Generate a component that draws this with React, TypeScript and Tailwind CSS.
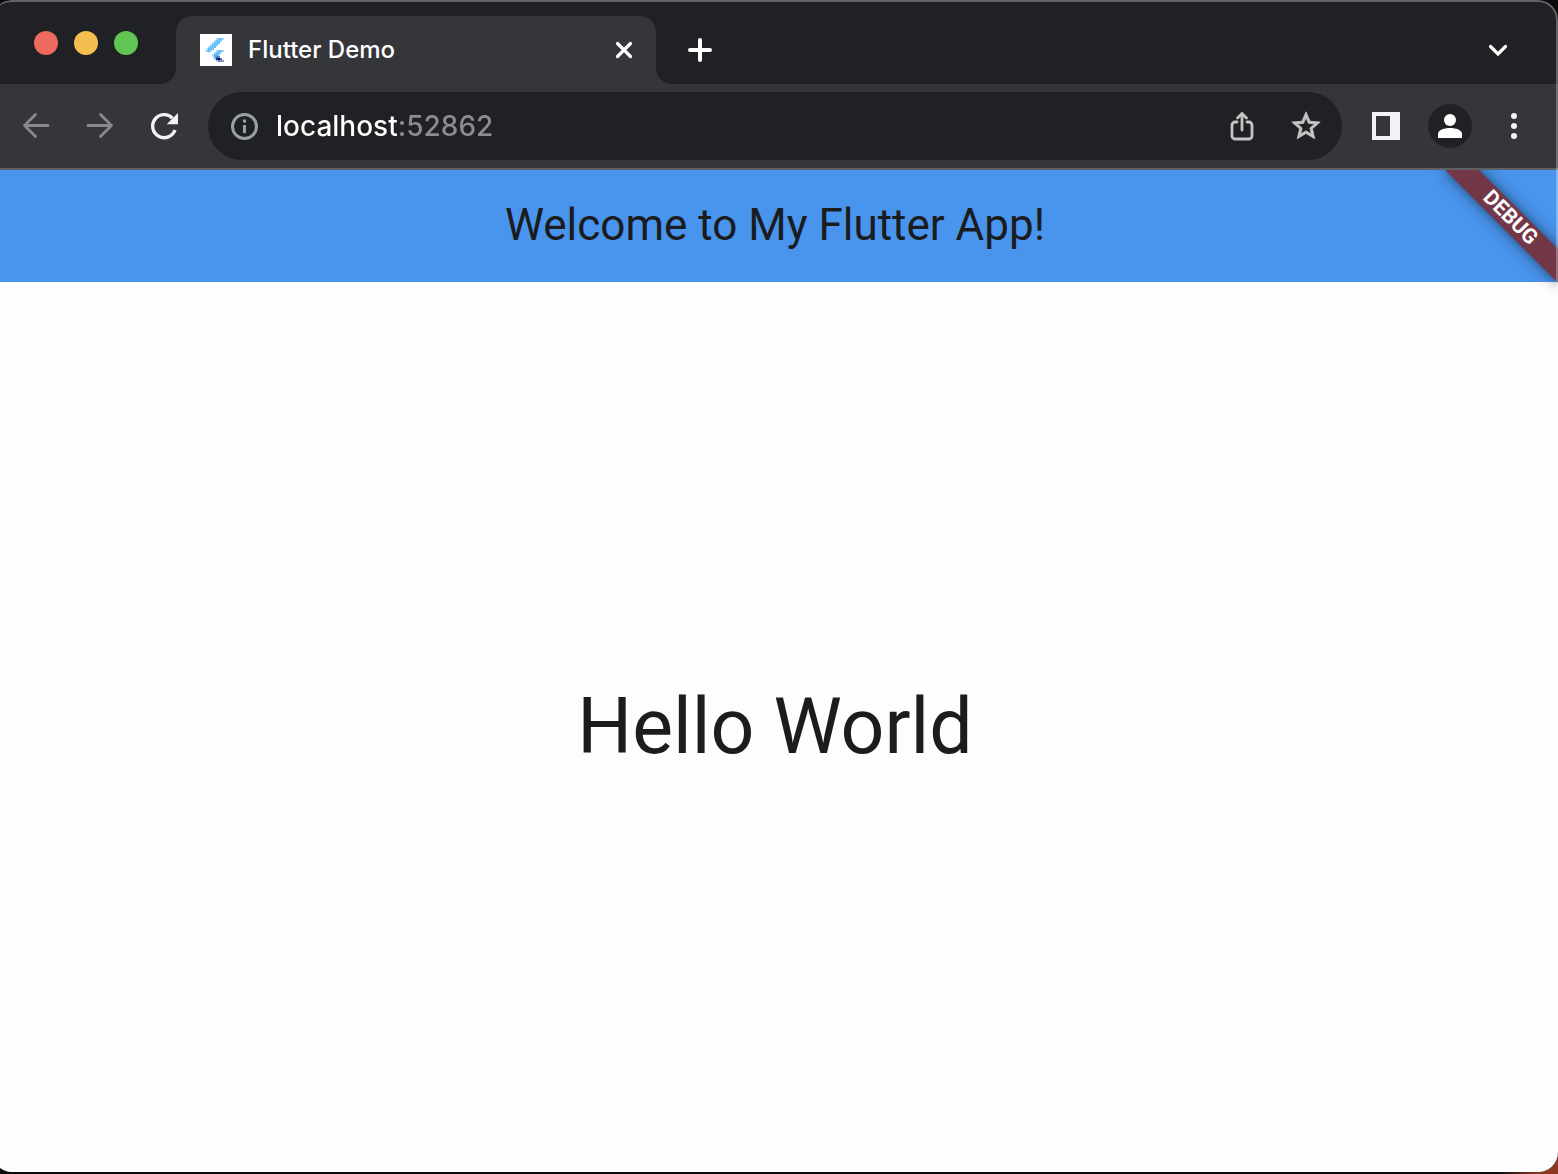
import React from 'react';

type Pixel = [x: number, y: number, w: number, color: string];

const FAVICON: Pixel[] = [
  [8, 2, 1, '#a8dafa'], [9, 2, 2, '#6cc1f7'], [11, 2, 1, '#a8dafa'],
  [7, 3, 1, '#a8dafa'], [8, 3, 2, '#6cc1f7'], [10, 3, 1, '#8fd0f9'],
  [6, 4, 1, '#a8dafa'], [7, 4, 3, '#6cc1f7'],
  [5, 5, 1, '#a8dafa'], [6, 5, 3, '#6cc1f7'],
  [4, 6, 1, '#a8dafa'], [5, 6, 3, '#6cc1f7'],
  [3, 7, 1, '#b5e0fb'], [4, 7, 3, '#6cc1f7'],
  [3, 8, 1, '#8fd0f9'], [4, 8, 1, '#6cc1f7'], [5, 8, 1, '#a8dafa'],
  [8, 8, 1, '#a8dafa'], [9, 8, 2, '#6cc1f7'], [11, 8, 1, '#a8dafa'],
  [4, 9, 1, '#d5ecfb'],
  [7, 9, 1, '#a8dafa'], [8, 9, 2, '#6cc1f7'], [10, 9, 1, '#a8dafa'],
  [6, 10, 1, '#a8dafa'], [7, 10, 2, '#57b4f2'], [9, 10, 1, '#8fd0f9'],
  [6, 11, 1, '#d5ecfb'], [7, 11, 1, '#57b4f2'], [8, 11, 1, '#3f83cf'], [9, 11, 1, '#5d7fc0'],
  [7, 12, 1, '#8fd0f9'], [8, 12, 1, '#123088'], [9, 12, 1, '#04107a'], [10, 12, 1, '#5c66a8'],
  [8, 13, 1, '#c5cae0'], [9, 13, 1, '#7079b2'], [10, 13, 2, '#8a93c0'],
];

function Favicon() {
  return (
    <svg className="size-8 shrink-0 bg-white" viewBox="0 0 16 16" shapeRendering="crispEdges" aria-hidden="true">
      {FAVICON.map(([x, y, w, color]) => (
        <rect key={`${x}-${y}`} x={x} y={y} width={w} height="1" fill={color} />
      ))}
    </svg>
  );
}

function Icon({ children }: { children: React.ReactNode }) {
  return (
    <svg className="size-8 shrink-0" viewBox="0 0 32 32" fill="none" stroke="currentColor" strokeLinecap="round" aria-hidden="true">
      {children}
    </svg>
  );
}

function ToolButton({ label, children, className = '' }: { label: string; children: React.ReactNode; className?: string }) {
  return (
    <button type="button" aria-label={label} className={`flex h-16 w-16 shrink-0 items-center justify-center ${className}`}>
      {children}
    </button>
  );
}

function TabStrip() {
  return (
    <div className="flex h-[84px] shrink-0 items-end bg-[#202124] pr-[26px]">
      <div className="flex w-[184px] shrink-0 items-center gap-4 self-stretch pt-0.5 pl-[42px]">
        <button type="button" aria-label="Close window" className="size-6 rounded-full bg-[#ed6a5e]" />
        <button type="button" aria-label="Minimize window" className="size-6 rounded-full bg-[#f5bf4f]" />
        <button type="button" aria-label="Zoom window" className="size-6 rounded-full bg-[#61c554]" />
      </div>
      <div className="relative flex h-[68px] w-[480px] items-center rounded-t-2xl bg-[#35363a] pr-4 pl-6 text-white">
        <svg className="absolute bottom-0 -left-4 size-4" viewBox="0 0 16 16" fill="#35363a" aria-hidden="true">
          <path d="M16 0v16H0A16 16 0 0 0 16 0Z" />
        </svg>
        <svg className="absolute -right-4 bottom-0 size-4" viewBox="0 0 16 16" fill="#35363a" aria-hidden="true">
          <path d="M0 0v16h16A16 16 0 0 1 0 0Z" />
        </svg>
        <Favicon />
        <span className="ml-4 flex-1 truncate text-2xl font-medium">Flutter Demo</span>
        <button type="button" aria-label="Close tab">
          <Icon>
            <path d="M9.5 9.5 22.5 22.5M22.5 9.5 9.5 22.5" strokeWidth="3.2" />
          </Icon>
        </button>
      </div>
      <button type="button" aria-label="New tab" className="flex h-[68px] w-[88px] items-center justify-center text-white">
        <Icon>
          <path d="M16 6v20M6 16h20" strokeWidth="4" />
        </Icon>
      </button>
      <button type="button" aria-label="Search tabs" className="ml-auto flex h-[68px] w-[68px] items-center justify-center text-white">
        <Icon>
          <path d="m8.5 12.5 7.5 7.5 7.5-7.5" strokeWidth="3.2" strokeLinejoin="miter" />
        </Icon>
      </button>
    </div>
  );
}

function Toolbar() {
  return (
    <div className="flex h-[86px] shrink-0 items-center border-b-2 border-[#606164] bg-[#35363a] px-3">
      <ToolButton label="Back" className="text-[#88898b]">
        <Icon>
          <path d="M28 15.500H4.500M15.500 4.500 4.500 15.500 15.500 26.500" strokeWidth="2.8" strokeLinejoin="round" />
        </Icon>
      </ToolButton>
      <ToolButton label="Forward" className="text-[#88898b]">
        <Icon>
          <path d="M4 15.500H27.500M16.500 4.500 27.500 15.500 16.500 26.500" strokeWidth="2.8" strokeLinejoin="round" />
        </Icon>
      </ToolButton>
      <ToolButton label="Reload" className="text-[#f1f3f4]">
        <Icon>
          <path d="M27 20A11.500 11.500 0 1 1 24.500 8.200" strokeWidth="3.4" strokeLinecap="butt" />
          <path d="M30 3v11.300H18.700Z" fill="currentColor" stroke="none" />
        </Icon>
      </ToolButton>
      <form className="mx-3 flex h-[68px] min-w-0 flex-1 items-center rounded-full bg-[#202124] pl-5 text-[#bdc1c6]" onSubmit={(e) => e.preventDefault()}>
        <button type="button" aria-label="View site information" className="text-[#9aa0a6]">
          <Icon>
            <circle cx="16.500" cy="16.500" r="12" strokeWidth="3" />
            <path d="M16.500 15v8M16.500 9.500v3" strokeWidth="3" strokeLinecap="butt" />
          </Icon>
        </button>
        <input
          aria-label="Address"
          defaultValue="localhost:52862"
          className="ml-4 min-w-0 flex-1 bg-[linear-gradient(90deg,#ffffff_121px,#8b8d90_121px)] bg-clip-text text-[28px] font-medium text-transparent outline-none"
        />
        <ToolButton label="Share this page" className="text-[#c4c4c5]">
          <Icon>
            <path d="M11 12H9a3 3 0 0 0-3 3v11a3 3 0 0 0 3 3h14a3 3 0 0 0 3-3V15a3 3 0 0 0-3-3h-2" strokeWidth="2.800" />
            <path d="M16 20V4M11.500 8 16 3.500 20.500 8" strokeWidth="2.800" />
          </Icon>
        </ToolButton>
        <ToolButton label="Bookmark this tab" className="mr-1 text-[#c4c4c5]">
          <svg className="size-[34px]" viewBox="0 0 24 24" fill="currentColor" stroke="currentColor" strokeWidth="0.6" aria-hidden="true">
            <path d="m22 9.240-7.190-.62L12 2 9.190 8.630 2 9.240l5.460 4.730L5.820 21 12 17.270 18.180 21l-1.630-7.030L22 9.240ZM12 15.400l-3.760 2.270 1-4.280-3.320-2.880 4.380-.38L12 6.100l1.710 4.040 4.380.38-3.320 2.880 1 4.280L12 15.400Z" />
          </svg>
        </ToolButton>
      </form>
      <ToolButton label="Side panel" className="text-[#f1f3f4]">
        <Icon>
          <path d="M2 2h28v28H2ZM6 6v20h14V6Z" fill="currentColor" fillRule="evenodd" stroke="none" />
        </Icon>
      </ToolButton>
      <ToolButton label="Profile" className="text-white">
        <span className="flex size-11 items-center justify-center rounded-full bg-[#202124]">
          <Icon>
            <g fill="currentColor" stroke="none">
              <circle cx="16" cy="10" r="6" />
              <path d="M4 28v-4c0-4 6-6 12-6s12 2 12 6v4Z" />
            </g>
          </Icon>
        </span>
      </ToolButton>
      <ToolButton label="Menu" className="text-[#f1f3f4]">
        <Icon>
          <g fill="currentColor" stroke="none">
            <circle cx="16" cy="6" r="3" />
            <circle cx="16" cy="16" r="3" />
            <circle cx="16" cy="26" r="3" />
          </g>
        </Icon>
      </ToolButton>
    </div>
  );
}

function FlutterPage() {
  return (
    <div className="relative flex flex-1 flex-col overflow-hidden bg-[#fdfcff] font-[Roboto,sans-serif] text-[#1a1c1e]">
      <header className="flex h-28 shrink-0 items-center justify-center bg-[#4994ec] pb-0.5">
        <h1 className="text-[44px] leading-none">Welcome to My Flutter App!</h1>
      </header>
      <main className="flex flex-1 items-center justify-center">
        <p className="text-[77px] leading-none">Hello World</p>
      </main>
      <div className="absolute top-9 -right-8 flex h-6 w-40 rotate-45 items-center justify-center bg-[#733748] text-[21px] font-bold text-white shadow-[0_0_14px_rgba(0,0,0,0.55)]">
        DEBUG
      </div>
    </div>
  );
}

export default function App() {
  return (
    <div className="flex min-h-screen flex-col overflow-hidden bg-[#0b0b0b] bg-[radial-gradient(circle_at_bottom_right,#8a3a22_20px,#0b0b0b_60px)] font-[Inter,sans-serif]">
      <div className="relative mb-0.5 -ml-2 flex flex-1 flex-col overflow-hidden rounded-[20px] bg-[#202124]">
        <TabStrip />
        <Toolbar />
        <FlutterPage />
        <div className="pointer-events-none absolute inset-0 rounded-[20px] border-t-2 border-r-2 border-white/30" />
      </div>
    </div>
  );
}
